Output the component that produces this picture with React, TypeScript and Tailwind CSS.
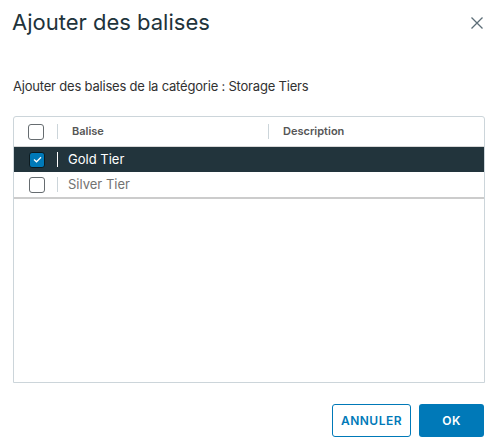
import React, { useState } from 'react';

type Tag = { id: number; name: string; description: string };

const tags: Tag[] = [
  { id: 1, name: 'Gold Tier', description: '' },
  { id: 2, name: 'Silver Tier', description: '' },
];

const Check: React.FC<{ checked: boolean }> = ({ checked }) => (
  <span
    className={`flex h-[16px] w-[16px] shrink-0 items-center justify-center rounded-[3px] border ${
      checked ? 'border-[#0c1a20] bg-[#0079b8]' : 'border-[#666c70] bg-white'
    }`}
  >
    {checked && (
      <svg width="9" height="7" viewBox="0 0 9 7" fill="none">
        <path d="M1 3.5 L3.5 5.8 L8 1.2" stroke="white" strokeWidth="1.3" />
      </svg>
    )}
  </span>
);

const App: React.FC = () => {
  const [selected] = useState<number[]>([1]);

  return (
    <div
      className="h-[447px] w-[498px] bg-white text-[#313131]"
      style={{ fontFamily: 'Inter, "Noto Sans", sans-serif' }}
    >
      <div className="flex items-start justify-between pl-[12px] pr-[15px] pt-[7px]">
        <h2 className="text-[22px] font-normal leading-[30px] text-[#21333b]">Ajouter des balises</h2>
        <button className="mt-[10px] text-[#5c6d77]">
          <svg width="12" height="12" viewBox="0 0 12 12" fill="none">
            <path d="M0.5 0.5 L11.5 11.5 M11.5 0.5 L0.5 11.5" stroke="currentColor" strokeWidth="1.3" />
          </svg>
        </button>
      </div>

      <p className="ml-[13px] mt-[40px] text-[13px] leading-[18px] tracking-[-0.2px] text-[#313131]">
        Ajouter des balises de la catégorie : Storage Tiers
      </p>

      <div className="mx-[13px] mt-[21px] flex h-[267px] flex-col rounded-t-[3px] border border-[#ccd5da]">
        <div className="flex h-[30px] items-center border-b border-[#d7d7d7] pl-[14px] text-[11px] font-semibold text-[#565656]">
          <Check checked={false} />
          <span className="ml-[13px] h-[15px] w-px bg-[#ccd5da]" />
          <span className="ml-[14px] w-[196px]">Balise</span>
          <span className="h-[15px] w-px bg-[#ccd5da]" />
          <span className="ml-[14px]">Description</span>
        </div>
        {tags.map((t) => {
          const on = selected.includes(t.id);
          return (
            <div
              key={t.id}
              className={`flex h-[25px] items-center pl-[15px] text-[13px] ${
                on ? 'bg-[#22343c] text-white' : 'bg-white text-[#727272]'
              }`}
            >
              <Check checked={on} />
              <span className={`ml-[12px] h-[15px] w-px ${on ? 'bg-white' : 'bg-[#ccd5da]'}`} />
              <span className="ml-[10px]">{t.name}</span>
            </div>
          );
        })}
        <div className="h-[2px] bg-[#cccccc]" />
        <div className="flex-1" />
      </div>

      <div className="mr-[14px] mt-[21px] flex justify-end gap-[8px]">
        <button className="h-[33px] w-[79px] rounded-[3px] border border-[#0079b8] bg-white text-[12px] font-semibold tracking-[0.5px] text-[#0079b8]">
          ANNULER
        </button>
        <button className="h-[33px] w-[65px] rounded-[3px] bg-[#0079b8] text-[12px] font-semibold tracking-[0.5px] text-white">
          OK
        </button>
      </div>
    </div>
  );
};

export default App;
